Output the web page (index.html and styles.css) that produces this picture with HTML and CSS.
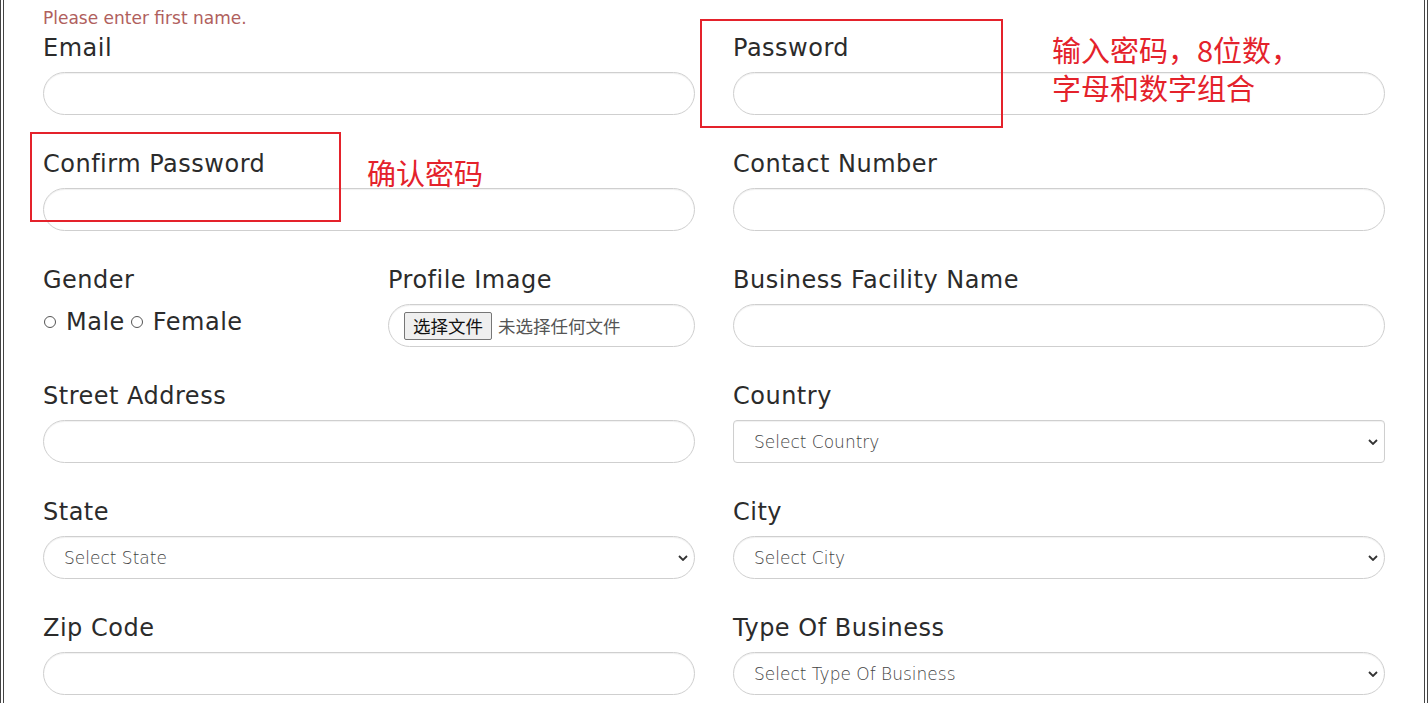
FILE: index.html
```html
<!DOCTYPE html>
<html lang="en">
<head>
<meta charset="utf-8">
<title>Register</title>
<link rel="stylesheet" href="styles.css">
</head>
<body>
<div class="frame">
  <div class="content">
    <div class="prev-field">
      <input class="control invalid" type="text">
      <div class="error">Please enter first name.</div>
    </div>
    <div class="grid">
      <div class="group">
        <label class="label">Email</label>
        <input class="control" type="text">
      </div>
      <div class="group">
        <label class="label">Password</label>
        <input class="control" type="password">
      </div>
      <div class="group">
        <label class="label">Confirm Password</label>
        <input class="control" type="password">
      </div>
      <div class="group">
        <label class="label">Contact Number</label>
        <input class="control" type="text">
      </div>
      <div class="split">
        <div class="group">
          <label class="label">Gender</label>
          <div class="radios">
            <span class="radio"><span class="dot"></span>Male</span>
            <span class="radio"><span class="dot"></span>Female</span>
          </div>
        </div>
        <div class="group">
          <label class="label">Profile Image</label>
          <div class="control file">
            <span class="file-btn">选择文件</span>
            <span class="file-name">未选择任何文件</span>
          </div>
        </div>
      </div>
      <div class="group">
        <label class="label">Business Facility Name</label>
        <input class="control" type="text">
      </div>
      <div class="group">
        <label class="label">Street Address</label>
        <input class="control" type="text">
      </div>
      <div class="group">
        <label class="label">Country</label>
        <div class="control select square"><span>Select Country</span><svg class="chev" viewBox="0 0 10 6" width="10" height="6"><path d="M1 1l4 4 4-4" fill="none" stroke="#333" stroke-width="1.8"/></svg></div>
      </div>
      <div class="group">
        <label class="label">State</label>
        <div class="control select"><span>Select State</span><svg class="chev" viewBox="0 0 10 6" width="10" height="6"><path d="M1 1l4 4 4-4" fill="none" stroke="#333" stroke-width="1.8"/></svg></div>
      </div>
      <div class="group">
        <label class="label">City</label>
        <div class="control select"><span>Select City</span><svg class="chev" viewBox="0 0 10 6" width="10" height="6"><path d="M1 1l4 4 4-4" fill="none" stroke="#333" stroke-width="1.8"/></svg></div>
      </div>
      <div class="group">
        <label class="label">Zip Code</label>
        <input class="control" type="text">
      </div>
      <div class="group">
        <label class="label">Type Of Business</label>
        <div class="control select"><span>Select Type Of Business</span><svg class="chev" viewBox="0 0 10 6" width="10" height="6"><path d="M1 1l4 4 4-4" fill="none" stroke="#333" stroke-width="1.8"/></svg></div>
      </div>
    </div>
  </div>

  <div class="mark mark-pw"></div>
  <div class="mark mark-confirm"></div>
  <div class="note note-pw">输入密码，8位数，<br>字母和数字组合</div>
  <div class="note note-confirm">确认密码</div>
</div>
</body>
</html>
```

FILE: styles.css
```css
html, body {
  margin: 0;
  padding: 0;
  background: #fff;
}

.frame {
  position: relative;
  height: 703px;
  overflow: hidden;
  border-left: 4px double #444;
  border-right: 4px double #444;
  font-family: "DejaVu Sans", "Noto Sans", sans-serif;
  color: #2b2b2b;
}

.content {
  padding: 0 39px;
}

.prev-field .control {
  margin-top: -46px;
}

.invalid {
  box-shadow: 0 0 10px rgba(230, 70, 80, 0.35);
  border-color: #f0c8c8;
}

.error {
  margin-top: 10px;
  margin-bottom: 1px;
  font-size: 17px;
  line-height: 22px;
  color: #b0605d;
  font-weight: 400;
}

.grid {
  display: grid;
  grid-template-columns: 1fr 1fr;
  column-gap: 38px;
}

.split {
  display: grid;
  grid-template-columns: 1fr 1fr;
  column-gap: 38px;
}

.group {
  margin-bottom: 31px;
}

.label {
  display: block;
  font-size: 24px;
  line-height: 34px;
  padding-top: 1px;
  margin-bottom: 7px;
  color: #2b2b2b;
  letter-spacing: 0.5px;
}

.control {
  display: flex;
  align-items: center;
  box-sizing: border-box;
  width: 100%;
  height: 43px;
  margin: 0;
  padding: 0 20px;
  border: 1px solid #cfcfcf;
  border-radius: 22px;
  background: #fff;
  box-shadow: inset 0 1px 1px rgba(0, 0, 0, 0.06);
  font-family: inherit;
  font-size: 17px;
  outline: none;
}

.select {
  justify-content: space-between;
  color: #444;
  font-weight: 200;
  padding-right: 6px;
}

.select.square {
  border-radius: 4px;
}

.chev {
  display: block;
}

.radios {
  display: flex;
  align-items: center;
  height: 35px;
  font-size: 24px;
  letter-spacing: 0.5px;
}

.radio {
  display: inline-flex;
  align-items: center;
  margin-right: 5px;
}

.dot {
  display: inline-block;
  width: 12px;
  height: 12px;
  border: 1px solid #555;
  border-radius: 50%;
  margin: 0 10px 0 1px;
  box-sizing: border-box;
}

.file {
  padding: 0 0 0 15px;
  gap: 6px;
}

.file-btn {
  display: inline-flex;
  align-items: center;
  box-sizing: border-box;
  height: 28px;
  padding: 0 8px;
  border: 1px solid #767676;
  border-radius: 2px;
  background: #efefef;
  font-family: "Noto Sans CJK SC", sans-serif;
  font-size: 17.5px;
  color: #111;
}

.file-name {
  font-family: "Noto Sans CJK SC", sans-serif;
  font-size: 17.5px;
  color: #555;
}

.mark {
  position: absolute;
  border: 2px solid #e4222b;
  box-sizing: border-box;
}

.mark-pw {
  left: 696px;
  top: 19px;
  width: 303px;
  height: 109px;
}

.mark-confirm {
  left: 26px;
  top: 132px;
  width: 311px;
  height: 90px;
}

.note {
  position: absolute;
  font-family: "Noto Sans CJK SC", sans-serif;
  font-size: 29px;
  line-height: 38px;
  color: #e4222b;
}

.note-pw {
  left: 1048px;
  top: 30px;
}

.note-confirm {
  left: 363px;
  top: 153px;
}
```
